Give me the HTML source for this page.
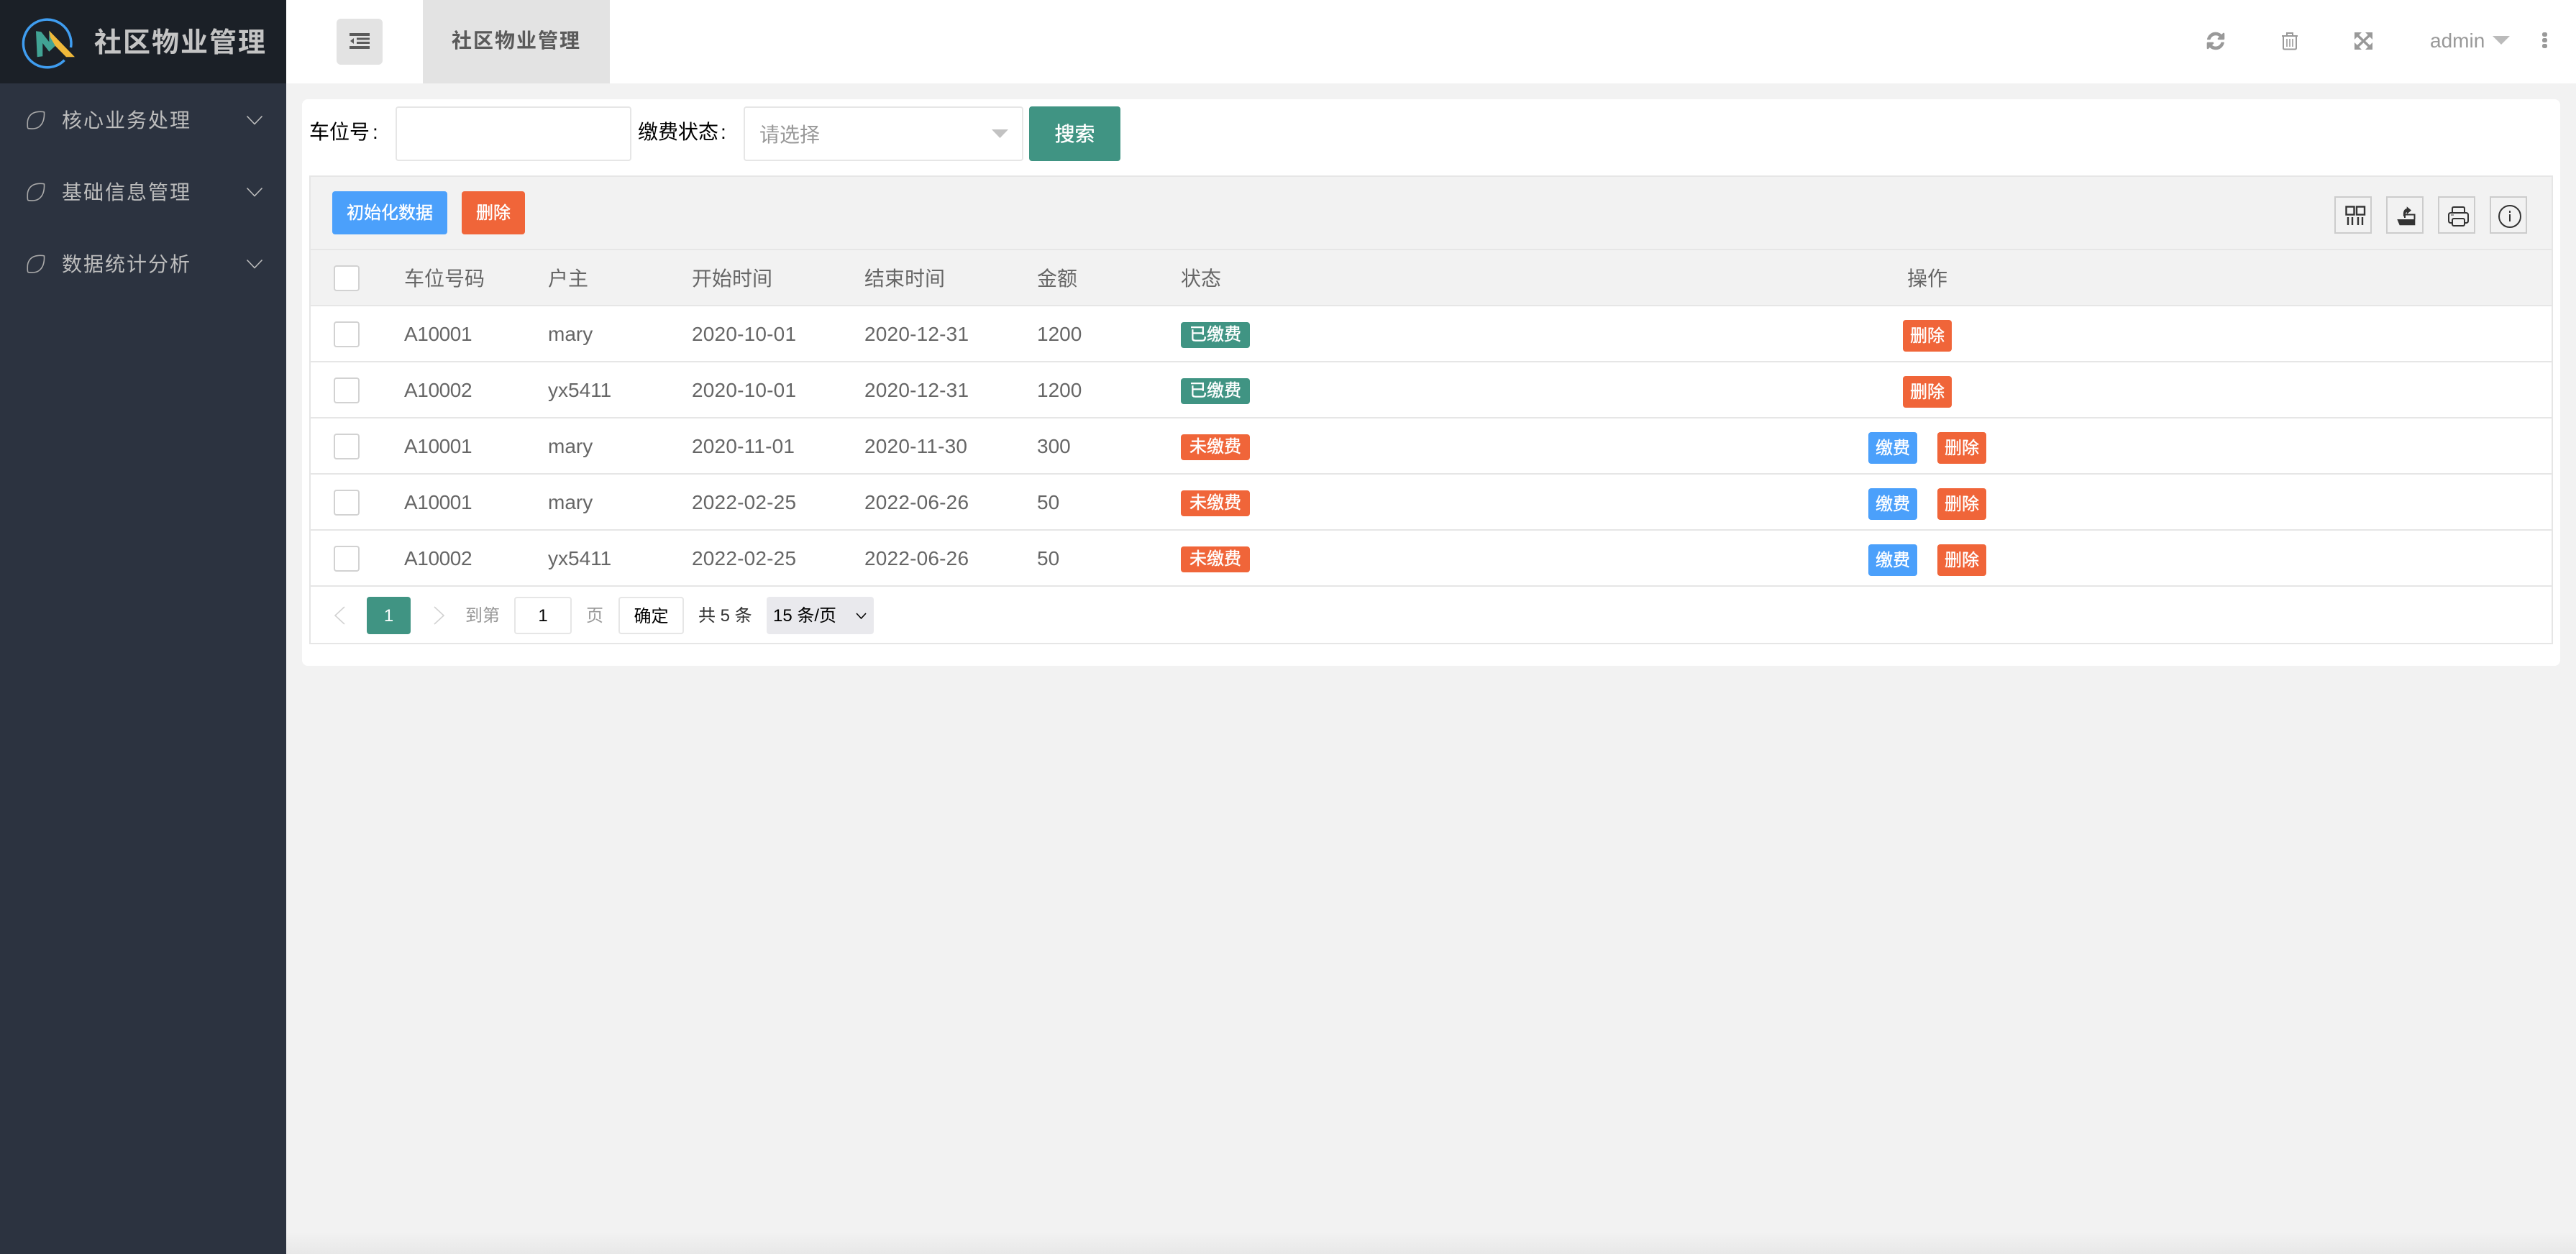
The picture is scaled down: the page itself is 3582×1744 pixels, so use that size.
<!DOCTYPE html>
<html lang="zh-CN">
<head>
<meta charset="utf-8">
<title>社区物业管理</title>
<style>
html,body{margin:0;padding:0;width:3582px;height:1744px;overflow:hidden;background:#f2f2f2;font-family:"Liberation Sans","Noto Sans CJK SC",sans-serif;font-size:28px;color:#666}
*{box-sizing:border-box}
.a{position:absolute;white-space:nowrap}
.t{position:absolute;white-space:nowrap;line-height:40px;height:40px}
.id{letter-spacing:-.4px}
.d{letter-spacing:.2px}
.box{position:absolute}
.cb{position:absolute;left:464px;width:36px;height:36px;border:2px solid #d2d2d2;border-radius:4px;background:#fff}
.line{position:absolute;left:430px;width:3120px;height:2px;background:#e6e6e6}
.btn{position:absolute;height:44px;width:68px;border-radius:4px;color:#fff;font-size:24px;line-height:46px;text-align:center;-webkit-text-stroke:.4px #fff}
.tag{position:absolute;left:1642px;width:96px;height:36px;border-radius:4px;color:#fff;font-size:24px;line-height:36px;text-align:center;-webkit-text-stroke:.4px #fff}
.g{background:#409483}.o{background:#f06539}.b{background:#4ba0fb}
.m{position:absolute;left:86px;line-height:42px;height:42px;color:#bdbdbd;font-size:28px;letter-spacing:2px;white-space:nowrap}
</style>
</head>
<body>
<!-- sidebar -->
<div class="box" style="left:0;top:0;width:398px;height:1744px;background:#2c3340"></div>
<div class="box" style="left:0;top:0;width:398px;height:116px;background:#1b2027"></div>
<div class="a" style="left:131px;top:36px;line-height:48px;font-size:38px;letter-spacing:2px;font-weight:700;color:#c4c4c4">社区物业管理</div>
<div class="m" style="top:147px">核心业务处理</div>
<div class="m" style="top:247px">基础信息管理</div>
<div class="m" style="top:347px">数据统计分析</div>

<!-- header -->
<div class="box" style="left:398px;top:0;width:3184px;height:116px;background:#fff"></div>
<div class="box" style="left:468px;top:26px;width:64px;height:64px;background:#e3e3e3;border-radius:6px"></div>
<div class="box" style="left:588px;top:0;width:260px;height:116px;background:#e3e3e3"></div>
<div class="a" style="left:628px;top:37px;line-height:40px;font-size:28px;letter-spacing:2px;font-weight:700;color:#5a5a5a">社区物业管理</div>
<div class="a" style="left:3379px;top:37px;line-height:40px;font-size:28px;color:#999">admin</div>

<!-- bottom shade -->
<div class="box" style="left:398px;top:1713px;width:3184px;height:31px;background:linear-gradient(#f2f2f2,#e8e8e8)"></div>

<!-- card -->
<div class="box" style="left:420px;top:138px;width:3140px;height:788px;background:#fff;border-radius:8px"></div>

<!-- search form -->
<div class="t" style="left:430px;top:164px;color:#000">车位号<span style="margin-left:4px">:</span></div>
<div class="box" style="left:550px;top:148px;width:328px;height:76px;background:#fff;border:2px solid #e6e6e6;border-radius:4px"></div>
<div class="t" style="left:887px;top:164px;color:#000">缴费状态<span style="margin-left:3px">:</span></div>
<div class="box" style="left:1034px;top:148px;width:389px;height:76px;background:#fff;border:2px solid #e6e6e6;border-radius:4px"></div>
<div class="t" style="left:1056px;top:168px;color:#999">请选择</div>
<div class="box" style="left:1431px;top:148px;width:127px;height:76px;background:#409483;border-radius:4px;color:#fff;text-align:center;line-height:78px;font-size:28px;-webkit-text-stroke:.4px #fff">搜索</div>

<!-- table backgrounds -->
<div class="box" style="left:430px;top:244px;width:3120px;height:182px;background:#f2f2f2"></div>
<div class="line" style="top:244px"></div>
<div class="line" style="top:346px"></div>
<div class="line" style="top:424px"></div>
<div class="line" style="top:502px"></div>
<div class="line" style="top:580px"></div>
<div class="line" style="top:658px"></div>
<div class="line" style="top:736px"></div>
<div class="line" style="top:814px"></div>
<div class="line" style="top:894px"></div>
<div class="box" style="left:430px;top:244px;width:2px;height:652px;background:#e6e6e6"></div>
<div class="box" style="left:3548px;top:244px;width:2px;height:652px;background:#e6e6e6"></div>

<!-- toolbar -->
<div class="box b" style="left:462px;top:266px;width:160px;height:60px;border-radius:4px;color:#fff;font-size:24px;line-height:62px;text-align:center;-webkit-text-stroke:.4px #fff">初始化数据</div>
<div class="box o" style="left:642px;top:266px;width:88px;height:60px;border-radius:4px;color:#fff;font-size:24px;line-height:62px;text-align:center;-webkit-text-stroke:.4px #fff">删除</div>
<div class="box" style="left:3246px;top:273px;width:52px;height:52px;border:2px solid #ccc"></div>
<div class="box" style="left:3318px;top:273px;width:52px;height:52px;border:2px solid #ccc"></div>
<div class="box" style="left:3390px;top:273px;width:52px;height:52px;border:2px solid #ccc"></div>
<div class="box" style="left:3462px;top:273px;width:52px;height:52px;border:2px solid #ccc"></div>

<!-- head row -->
<div class="cb" style="top:369px"></div>
<div class="t" style="left:562px;top:368px">车位号码</div>
<div class="t" style="left:762px;top:368px">户主</div>
<div class="t" style="left:962px;top:368px">开始时间</div>
<div class="t" style="left:1202px;top:368px">结束时间</div>
<div class="t" style="left:1442px;top:368px">金额</div>
<div class="t" style="left:1642px;top:368px">状态</div>
<div class="t" style="left:2652px;top:368px">操作</div>

<!-- row 1 -->
<div class="cb" style="top:447px"></div>
<div class="t id" style="left:562px;top:445px">A10001</div>
<div class="t" style="left:762px;top:445px">mary</div>
<div class="t d" style="left:962px;top:445px">2020-10-01</div>
<div class="t d" style="left:1202px;top:445px">2020-12-31</div>
<div class="t" style="left:1442px;top:445px">1200</div>
<div class="tag g" style="top:448px">已缴费</div>
<div class="btn o" style="left:2646px;top:445px">删除</div>

<!-- row 2 -->
<div class="cb" style="top:525px"></div>
<div class="t id" style="left:562px;top:523px">A10002</div>
<div class="t" style="left:762px;top:523px">yx5411</div>
<div class="t d" style="left:962px;top:523px">2020-10-01</div>
<div class="t d" style="left:1202px;top:523px">2020-12-31</div>
<div class="t" style="left:1442px;top:523px">1200</div>
<div class="tag g" style="top:526px">已缴费</div>
<div class="btn o" style="left:2646px;top:523px">删除</div>

<!-- row 3 -->
<div class="cb" style="top:603px"></div>
<div class="t id" style="left:562px;top:601px">A10001</div>
<div class="t" style="left:762px;top:601px">mary</div>
<div class="t d" style="left:962px;top:601px">2020-11-01</div>
<div class="t d" style="left:1202px;top:601px">2020-11-30</div>
<div class="t" style="left:1442px;top:601px">300</div>
<div class="tag o" style="top:604px">未缴费</div>
<div class="btn b" style="left:2598px;top:601px">缴费</div>
<div class="btn o" style="left:2694px;top:601px">删除</div>

<!-- row 4 -->
<div class="cb" style="top:681px"></div>
<div class="t id" style="left:562px;top:679px">A10001</div>
<div class="t" style="left:762px;top:679px">mary</div>
<div class="t d" style="left:962px;top:679px">2022-02-25</div>
<div class="t d" style="left:1202px;top:679px">2022-06-26</div>
<div class="t" style="left:1442px;top:679px">50</div>
<div class="tag o" style="top:682px">未缴费</div>
<div class="btn b" style="left:2598px;top:679px">缴费</div>
<div class="btn o" style="left:2694px;top:679px">删除</div>

<!-- row 5 -->
<div class="cb" style="top:759px"></div>
<div class="t id" style="left:562px;top:757px">A10002</div>
<div class="t" style="left:762px;top:757px">yx5411</div>
<div class="t d" style="left:962px;top:757px">2022-02-25</div>
<div class="t d" style="left:1202px;top:757px">2022-06-26</div>
<div class="t" style="left:1442px;top:757px">50</div>
<div class="tag o" style="top:760px">未缴费</div>
<div class="btn b" style="left:2598px;top:757px">缴费</div>
<div class="btn o" style="left:2694px;top:757px">删除</div>

<!-- pager -->
<div class="box" style="left:510px;top:830px;width:61px;height:52px;background:#409483;border-radius:4px;color:#fff;font-size:24px;line-height:54px;text-align:center">1</div>
<div class="a" style="left:647px;top:837px;line-height:40px;font-size:24px;color:#999">到第</div>
<div class="box" style="left:715px;top:830px;width:80px;height:52px;border:2px solid #e6e6e6;border-radius:4px;background:#fff;color:#000;font-size:24px;line-height:50px;text-align:center">1</div>
<div class="a" style="left:815px;top:837px;line-height:40px;font-size:24px;color:#999">页</div>
<div class="box" style="left:860px;top:830px;width:91px;height:52px;border:2px solid #e6e6e6;border-radius:4px;background:#fff;color:#000;font-size:24px;line-height:52px;text-align:center">确定</div>
<div class="a" style="left:971px;top:837px;line-height:40px;font-size:24px;color:#333">共 5 条</div>
<div class="box" style="left:1066px;top:830px;width:149px;height:52px;background:#e9e9ed;border-radius:4px;color:#000;font-size:24px;line-height:54px;padding-left:9px">15 条/页</div>

<!-- icons -->
<svg class="box" style="left:0;top:0" width="3582" height="1744" viewBox="0 0 3582 1744" fill="none" xmlns="http://www.w3.org/2000/svg">
  <!-- logo -->
  <path d="M98.500 66 A33.300 33.300 0 1 0 89.600 83.600" stroke="#3f9df0" stroke-width="3.500" fill="none"/>
  <path d="M50 43.300 L57.300 44.300 L68.300 58.300 L68.300 42.700 L77.300 53.300 L81.700 59.300 L68.300 71.700 L59.300 60 L59.300 78.300 L51.700 79.300 Z" fill="#41a394"/>
  <path d="M68.300 42.500 L104 79.300 L92 79.300 L77 64 L70 52 Z" fill="#f0b93a"/>
  <!-- side menu icons -->
  <g stroke="#a9a9a9" stroke-width="1.600" fill="none">
    <path d="M61.500 156 C60 155 52 155 48 156.500 C42 158.500 38.500 164 38.300 170 C38.200 174 38 178.500 39.500 178.700 C44 179.300 50 179.500 54 176.500 C59 173 62 167 61.500 156 Z"/>
    <path d="M61.500 256 C60 255 52 255 48 256.500 C42 258.500 38.500 264 38.300 270 C38.200 274 38 278.500 39.500 278.700 C44 279.300 50 279.500 54 276.500 C59 273 62 267 61.500 256 Z"/>
    <path d="M61.500 356 C60 355 52 355 48 356.500 C42 358.500 38.500 364 38.300 370 C38.200 374 38 378.500 39.500 378.700 C44 379.300 50 379.500 54 376.500 C59 373 62 367 61.500 356 Z"/>
  </g>
  <g stroke="#bdbdbd" stroke-width="1.600" fill="none">
    <path d="M343.500 161.500 L354 172.500 L364.500 161.500"/>
    <path d="M343.500 261.500 L354 272.500 L364.500 261.500"/>
    <path d="M343.500 361.500 L354 372.500 L364.500 361.500"/>
  </g>
  <!-- menu fold -->
  <g fill="#5a5a5a">
    <rect x="486" y="46" width="28" height="4"/>
    <rect x="496" y="52.500" width="18" height="3"/>
    <rect x="496" y="58" width="18" height="3"/>
    <rect x="486" y="64" width="28" height="4"/>
    <path d="M492 53 L492 61 L487 57 Z"/>
  </g>
  <!-- refresh -->
  <path transform="translate(3069 43) scale(0.0156)" fill="#999" stroke="#999" stroke-width="40" d="M1511 1056q0 5-1 7-64 268-268 434.5t-478 166.5q-146 0-282.5-55t-243.5-157l-129 129q-19 19-45 19t-45-19-19-45v-448q0-26 19-45t45-19h448q26 0 45 19t19 45-19 45l-137 137q71 66 161 102t187 36q134 0 250-65t186-179q11-17 53-117 8-23 30-23h192q13 0 22.5 9.5t9.5 22.5zm25-800v448q0 26-19 45t-45 19h-448q-26 0-45-19t-19-45 19-45l138-138q-148-137-349-137-134 0-250 65t-186 179q-11 17-53 117-8 23-30 23h-199q-13 0-22.5-9.5t-9.5-22.5v-7q65-268 270-434.5t480-166.5q146 0 284 55.5t245 156.5l130-129q19-19 45-19t45 19 19 45z"/>
  <!-- trash -->
  <g stroke="#999" stroke-width="2" fill="none">
    <path d="M3173 50 H3195"/>
    <path d="M3180 50 V46 H3188 V50"/>
    <path d="M3175 50 V67 Q3175 68.500 3177 68.500 H3191 Q3193 68.500 3193 67 V50"/>
    <path d="M3180 54 V65 M3184 54 V65 M3188 54 V65" stroke-width="1.600"/>
  </g>
  <!-- fullscreen -->
  <g fill="#999">
    <path d="M3274 45 H3284 L3274 55 Z"/>
    <path d="M3299 45 H3289 L3299 55 Z"/>
    <path d="M3274 69 H3284 L3274 59 Z"/>
    <path d="M3299 69 H3289 L3299 59 Z"/>
  </g>
  <path d="M3277 48 L3296 66 M3296 48 L3277 66" stroke="#999" stroke-width="3.600"/>
  <!-- admin caret -->
  <path d="M3466 50 H3490 L3478 62 Z" fill="#bbb"/>
  <!-- dots -->
  <g fill="#999">
    <rect x="3535" y="45" width="7" height="6" rx="2.500"/>
    <rect x="3535" y="53" width="7" height="6" rx="2.500"/>
    <rect x="3535" y="61" width="7" height="6" rx="2.500"/>
  </g>
  <!-- select caret -->
  <path d="M1379 180 H1402 L1390.500 192 Z" fill="#c2c2c2"/>
  <!-- toolbar: columns -->
  <g stroke="#333" stroke-width="2.400" fill="none">
    <rect x="3262.500" y="287.500" width="11" height="11"/>
    <rect x="3277" y="287.500" width="11" height="11"/>
    <path d="M3265 302 V313 M3271 302 V313 M3279 302 V313 M3285 302 V313"/>
  </g>
  <!-- toolbar: export -->
  <path d="M3333.300 305 H3358.300 V313.300 H3336.700 Z" fill="#333"/>
  <path d="M3344 303 V298.500 H3357.500 V305" stroke="#333" stroke-width="2" fill="none"/>
  <path d="M3346.700 287.300 L3353 292.500 L3346.700 298 V295 Q3344.500 295.500 3345 301 L3342 301 Q3341 291 3346.700 290 Z" fill="#333"/>
  <!-- toolbar: printer -->
  <g stroke="#333" stroke-width="2" fill="none">
    <path d="M3410 296 V290 Q3410 288 3412 288 H3425 Q3427 288 3427 290 V296"/>
    <path d="M3410 310 H3408 Q3405 310 3405 307 V299 Q3405 296 3408 296 H3429 Q3432 296 3432 299 V307 Q3432 310 3429 310 H3427"/>
    <rect x="3410" y="304" width="17" height="10" rx="2"/>
    <path d="M3408 299 H3412" stroke-width="1"/>
  </g>
  <!-- toolbar: info -->
  <circle cx="3490" cy="301" r="15" stroke="#333" stroke-width="2" fill="none"/>
  <path d="M3490 298 V308" stroke="#333" stroke-width="2"/>
  <rect x="3489" y="293" width="2" height="3" fill="#333"/>
  <!-- pager arrows -->
  <g stroke="#d2d2d2" stroke-width="1.600" fill="none">
    <path d="M479 844 L466 856 L479 868"/>
    <path d="M604 844 L617 856 L604 868"/>
  </g>
  <!-- page size chevron -->
  <path d="M1191 853 L1197.500 860 L1204 853" stroke="#000" stroke-width="1.600" fill="none"/>
</svg>
</body>
</html>
